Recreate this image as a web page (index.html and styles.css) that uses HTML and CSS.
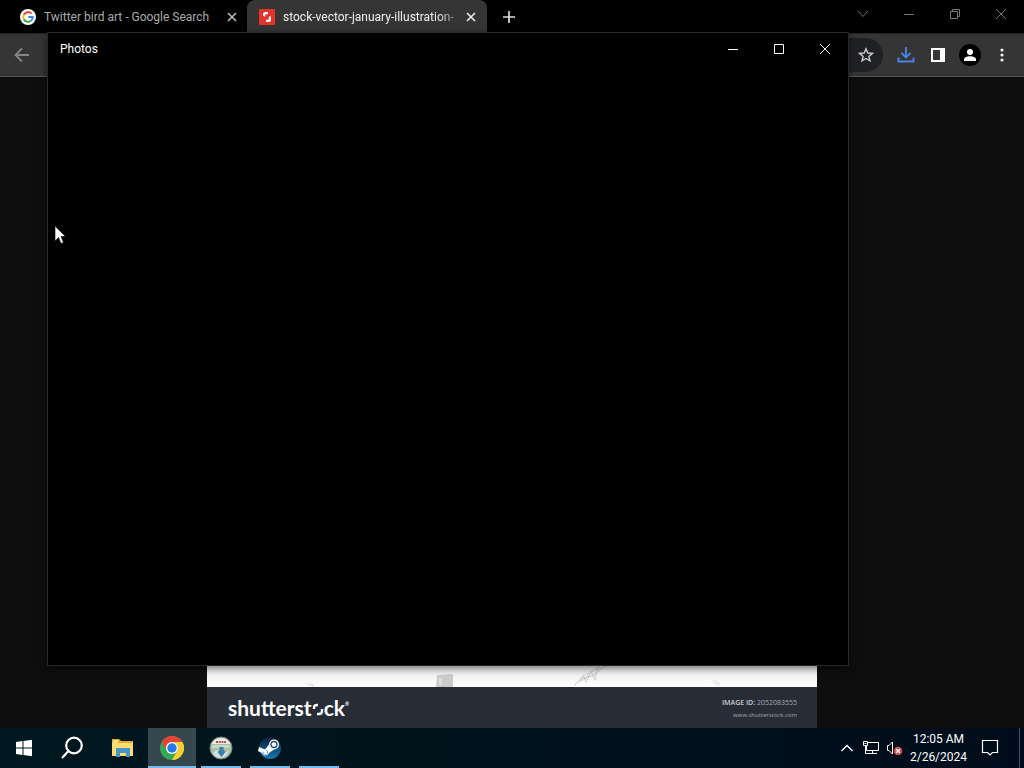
FILE: index.html
```html
<!DOCTYPE html>
<html lang="en">
<head>
<meta charset="utf-8">
<title>Desktop</title>
<link rel="stylesheet" href="styles.css">
</head>
<body>
<div class="desktop">
  <header class="tabstrip">
    <div class="tab">
      <svg class="favicon" viewBox="0 0 16 16" aria-hidden="true"><circle cx="8" cy="8" r="8" fill="#fff"/><g fill="none" stroke-width="2"><path d="M11.6 4.7A4.8 4.8 0 0 0 3.8 5.7" stroke="#ea4335"/><path d="M3.8 5.7a4.8 4.8 0 0 0 0 4.6" stroke="#fbbc05"/><path d="M3.8 10.3a4.8 4.8 0 0 0 7.2 1.4" stroke="#34a853"/><path d="M11 11.7A4.8 4.8 0 0 0 12.8 8H8.2" stroke="#4285f4"/></g></svg>
      <span class="tab-title">Twitter bird art - Google Search</span>
      <button class="tab-close" aria-label="Close tab"><svg width="10" height="10" viewBox="0 0 10 10"><path d="M1 1l8 8M9 1L1 9" stroke="#bbb" stroke-width="1.6"/></svg></button>
    </div>
    <div class="tab tab-active">
      <svg class="favicon" viewBox="0 0 16 16" aria-hidden="true"><rect width="16" height="16" rx="1" fill="#e5322b"/><path d="M6.500 3H9v2.200H7.500Q6.200 5.200 6.200 6.500V8L4 6.500V5.500Q4 3 6.500 3zM12 7.500V10.500Q12 13 9.500 13H7v-2.200h1.500Q9.800 10.800 9.800 9.500V7.500z" fill="#fff"/></svg>
      <span class="tab-title">stock-vector-january-illustration-</span>
      <button class="tab-close" aria-label="Close tab"><svg width="10" height="10" viewBox="0 0 10 10"><path d="M1 1l8 8M9 1L1 9" stroke="#eee" stroke-width="1.600"/></svg></button>
    </div>
    <button class="new-tab" aria-label="New tab"><svg width="12" height="12" viewBox="0 0 12 12"><path d="M6 0v12M0 6h12" stroke="#ddd" stroke-width="1.700"/></svg></button>
    <div class="caption caption-dim">
      <button aria-label="Search tabs"><svg width="12" height="12" viewBox="0 0 12 12"><path d="M1 3l5 5.500L11 3"/></svg></button>
      <button aria-label="Minimize"><svg width="12" height="12" viewBox="0 0 12 12"><path d="M1 6.500h10"/></svg></button>
      <button aria-label="Restore"><svg width="12" height="12" viewBox="0 0 12 12"><path d="M1.500 3.500h7v7h-7zM3.500 3.500v-2h7v7h-2"/></svg></button>
      <button aria-label="Close"><svg width="12" height="12" viewBox="0 0 12 12"><path d="M1 1l10 10M11 1L1 11"/></svg></button>
    </div>
  </header>

  <nav class="toolbar" aria-label="Browser toolbar">
    <button class="back" aria-label="Back"><svg width="16" height="16" viewBox="0 0 16 16"><path d="M15 8H2M8 1.500L1.500 8L8 14.500" fill="none" stroke="#858585" stroke-width="1.800"/></svg></button>
    <div class="address">
      <button aria-label="Bookmark this tab"><svg width="16" height="16" viewBox="0 0 16 16"><path d="M8 1.800l1.800 4.200 4.600.4-3.500 3 1.100 4.500L8 11.500l-4 2.400 1.100-4.500-3.500-3 4.600-.4z" fill="none" stroke="#ccc" stroke-width="1.400"/></svg></button>
    </div>
    <button class="tool" aria-label="Downloads"><svg width="18" height="18" viewBox="0 0 18 18"><path d="M9 1v10M4.500 7L9 11.500 13.500 7M1.500 11.500v4h15v-4" fill="none" stroke="#4b80e6" stroke-width="1.900"/></svg></button>
    <button class="tool" aria-label="Side panel"><svg width="14" height="14" viewBox="0 0 14 14"><path d="M0 0h14v14H0zM2 2v10h7V2z" fill="#fff" fill-rule="evenodd"/></svg></button>
    <button class="tool" aria-label="Profile"><svg width="22" height="22" viewBox="0 0 22 22"><circle cx="11" cy="11" r="11" fill="#000"/><circle cx="11" cy="8" r="3" fill="#fff"/><path d="M5 17v-1.500C5 13.300 8 12.200 11 12.200s6 1.100 6 3.300V17z" fill="#fff"/></svg></button>
    <button class="tool" aria-label="Menu"><svg width="4" height="14" viewBox="0 0 4 14" fill="#eee"><circle cx="2" cy="2" r="1.600"/><circle cx="2" cy="7" r="1.600"/><circle cx="2" cy="12" r="1.600"/></svg></button>
  </nav>

  <main class="page">
    <figure class="stock">
      <div class="artwork">
        <svg width="610" height="22" viewBox="0 0 610 22" aria-hidden="true"><path d="M230 10l16-1v13h-17z" fill="#ccc"/><path d="M232 13h3v7h-3z" fill="#dedede"/><path d="M97 18l9 1 1 3-5-2z" fill="#e4e4e4"/><g stroke="#c4c4c4" stroke-width="1.500" stroke-dasharray="1 1" fill="none"><path d="M368 20l8-9 8-4 9-6M371 17l7-3 8-8 16-6M376 10l3 7 5-10 4 7 3-12M373 14l12-3 10-8"/></g><path d="M504 17l5-3 5 5-3 2z" fill="#eee"/></svg>
      </div>
      <figcaption class="credit">
        <span class="brand">shutterst<svg width="12" height="13" viewBox="0 0 12 13" aria-hidden="true"><path d="M2 6V5Q2 2 5 2h1M10 6v2q0 3-3 3H5" fill="none" stroke="#fff" stroke-width="2.400"/></svg>ck<small>®</small></span>
        <span class="image-id"><b>IMAGE ID:</b> 2052083555<br><a href="#">www.shutterstock.com</a></span>
      </figcaption>
    </figure>
  </main>

  <footer class="taskbar">
    <button class="task" aria-label="Start"><svg width="18" height="18" viewBox="0 0 18 18" fill="#fff"><path d="M1 3l6.500-1v6.500H1zM8.500 1.900L17 .7v7.800H8.500zM1 9.500h6.500V16L1 15zM8.500 9.500H17v7.800l-8.500-1.200z"/></svg></button>
    <button class="task" aria-label="Search"><svg width="24" height="24" viewBox="0 0 24 24" fill="none" stroke="#fff" stroke-width="2.200"><circle cx="14" cy="9.500" r="7.800"/><path d="M8.500 15L2 22"/></svg></button>
    <button class="task" aria-label="File Explorer"><svg width="24" height="24" viewBox="0 0 24 24"><path d="M2 3h7l2 2h12v15H2z" fill="#e8ad35"/><path d="M3 4h5v3H3z" fill="#f8e38b"/><path d="M2 7h21v13H2z" fill="#ffdc70"/><path d="M6 12h14v9h-4v-4h-6v4H6z" fill="#4596c7"/></svg></button>
    <button class="task task-current" aria-label="Google Chrome"><svg width="24" height="24" viewBox="0 0 24 24"><circle cx="12" cy="12" r="12" fill="#34a853"/><path d="M12 6h10.400A12 12 0 0 0 1.600 6L6.800 15A6 6 0 0 1 12 6z" fill="#ea4335"/><path d="M22.400 6A12 12 0 0 1 12 24l5.200-9A6 6 0 0 0 12 6z" fill="#fbcf2d"/><circle cx="12" cy="12" r="6" fill="#fff"/><circle cx="12" cy="12" r="4.700" fill="#2878e8"/></svg></button>
    <button class="task task-open" aria-label="Installer"><svg width="24" height="24" viewBox="0 0 24 24"><circle cx="12" cy="12" r="11" fill="#a9bfa8" stroke="#76877f"/><path d="M2.500 8a10.500 10.500 0 0 1 19 0z" fill="#eee9e7"/><path d="M7 6h10" stroke="#b05357" stroke-width="2" stroke-dasharray="2 .7"/><path d="M3 9h18v3H3z" fill="#c6d8bf"/><path d="M4 17q4-5 8-2t8-1q-2 8-8 8t-8-5z" fill="#d3e0e3"/><path d="M10.500 11h4v3l2 2-4 5-4-5 2-2z" fill="#3e7fa9"/></svg></button>
    <button class="task task-open" aria-label="Steam"><svg width="24" height="24" viewBox="0 0 24 24"><defs><linearGradient id="steam" x2="0" y2="1"><stop offset="0" stop-color="#0b1c35"/><stop offset="1" stop-color="#1979b5"/></linearGradient></defs><circle cx="12" cy="12" r="11" fill="url(#steam)"/><path d="M1 11l6 2.500 4-5a5 5 0 1 1 5 5l-5 3.500a3.700 3.700 0 0 1-7 0L0 15z" fill="#fff"/><circle cx="16" cy="8.500" r="3" fill="#fff" stroke="#234b70" stroke-width="1.300"/><path d="M5 15.500a2.500 2.500 0 1 0 3-1.500" fill="none" stroke="#7b9eb9"/></svg></button>
    <button class="task task-open" aria-label="Photos"></button>
    <div class="tray">
      <button aria-label="Show hidden icons"><svg width="14" height="10" viewBox="0 0 14 10"><path d="M1.500 8L7 2.500 12.500 8" fill="none" stroke="#fff" stroke-width="1.400"/></svg></button>
      <button aria-label="Network"><svg width="18" height="16" viewBox="0 0 18 16" fill="none" stroke="#fff"><path d="M5.500 2.500h11v8h-12V6M10.500 10.500v3M6 13.500h9M1.500 1.500h4v4h-4zM3.500 5.500v8h3M2.500 3.500h2"/></svg></button>
      <button aria-label="Volume muted"><svg width="18" height="16" viewBox="0 0 18 16"><path d="M1.500 5.500H3l3.500-3.500v12L3 10.500H1.500z" fill="none" stroke="#fff"/><circle cx="12" cy="11" r="4.300" fill="#d64a50"/><path d="M10 9l4 4M14 9l-4 4" stroke="#fff" stroke-width="1.200"/></svg></button>
      <time class="clock" datetime="2024-02-26T00:05"><span>12:05 AM</span><span>2/26/2024</span></time>
      <button class="notifications" aria-label="Notifications"><svg width="18" height="18" viewBox="0 0 18 18"><path d="M1.500 1.500h15v12h-5L9 16l-2.500-2.500h-5z" fill="none" stroke="#fff" stroke-width="1.200"/></svg></button>
    </div>
  </footer>

  <section class="photos" aria-label="Photos window">
    <div class="photos-bar">
      <span class="photos-title">Photos</span>
      <div class="caption">
        <button aria-label="Minimize"><svg width="12" height="12" viewBox="0 0 12 12"><path d="M1 6.500h10"/></svg></button>
        <button aria-label="Maximize"><svg width="12" height="12" viewBox="0 0 12 12"><path d="M1.500 1.500h9v9h-9z"/></svg></button>
        <button aria-label="Close"><svg width="12" height="12" viewBox="0 0 12 12"><path d="M1 1l10 10M11 1L1 11"/></svg></button>
      </div>
    </div>
  </section>
  <svg class="pointer" width="12" height="20" viewBox="0 0 12 20" aria-hidden="true"><path d="M1 1v15l3.500-3.500L7 18.500l2.500-1-2.500-6h4.500z" fill="#fff" stroke="#000" stroke-width=".6"/></svg>
</div>
</body>
</html>
```

FILE: styles.css
```css
* { box-sizing: border-box; }
body { margin: 0; background: #0e0e0e; color: #fff; font: 12px/16px Roboto, "Open Sans", sans-serif; }
button { display: flex; align-items: center; justify-content: center; padding: 0; border: 0; background: none; color: inherit; font: inherit; }
svg { display: block; flex: none; }

.desktop { position: relative; display: flex; flex-direction: column; min-height: 100vh; overflow: hidden; }

.tabstrip { display: flex; height: 34px; background: #000; border-bottom: 1px solid #222; }
.tab { display: flex; align-items: center; gap: 8px; width: 240px; padding: 0 11px 0 12px; color: #aaa; }
.tab:first-child { width: 247px; padding-left: 20px; padding-right: 10px; }
.tab-active { background: #353535; border-radius: 8px 8px 0 0; color: #eee; }
.tab-active .tab-title { mask-image: linear-gradient(to right, #000 88%, transparent 104%); }
.favicon { width: 16px; height: 16px; }
.tab-title { flex: 1; min-width: 0; white-space: nowrap; }
.tab-close { width: 10px; height: 16px; }
.new-tab { width: 44px; }

.caption { display: flex; margin-left: auto; }
.caption button { width: 46px; height: 32px; }
.caption svg { fill: none; stroke: #fff; stroke-width: 1; }
.caption-dim { height: 28px; }
.caption-dim button { height: 28px; }
.caption-dim svg { stroke: #777; }

.toolbar { display: flex; align-items: center; height: 43px; padding-right: 6px; background: #353535; border-bottom: 1px solid #555; }
.back { width: 44px; height: 34px; }
.address { display: flex; justify-content: flex-end; align-items: center; flex: 1; height: 34px; margin: 0 7px 0 48px; padding-right: 9px; border-radius: 17px; background: #202124; }
.tool { width: 32px; height: 32px; }

.page { display: flex; flex: 1; flex-direction: column; align-items: center; background: #0e0e0e; }
.stock { display: flex; flex: 1; flex-direction: column; width: 610px; max-width: 100%; margin: 0; }
.artwork { display: flex; flex: 1; align-items: flex-end; background: linear-gradient(to top, #fff, #f4f4f4 12px, #ddd 22px); }
.credit { display: flex; align-items: center; justify-content: space-between; height: 41px; padding: 0 20px 0 21px; background: #262d37; }
.brand { display: flex; align-items: baseline; font: 700 21px/28px Lato, sans-serif; }
.brand small { align-self: flex-start; font-size: 5px; line-height: 20px; }
.image-id { padding-top: 2px; color: #aaa; font-family: "Open Sans", sans-serif; font-size: 7px; line-height: 12px; text-align: right; }
.image-id b { color: #ccc; font-weight: 600; }
.image-id a { color: inherit; font-size: 6px; text-decoration: none; }

.taskbar { display: flex; height: 40px; background: linear-gradient(to right, #001820, #00121b 50%, #000c1b); }
.task { width: 49px; padding-top: 2px; border-bottom: 2px solid transparent; }
.task:first-child, .task:nth-child(2) { width: 48px; }
.task:nth-child(3) { width: 52px; }
.task-current { width: 48px; background: #34484e; border-color: #76b9ed; }
.task-open { width: 40px; margin-left: 5px; margin-right: 4px; border-color: #76b9ed; }
.tray { display: flex; align-items: center; margin-left: auto; padding-right: 4px; }
.tray button { width: 24px; height: 40px; }
.clock { display: flex; flex-direction: column; align-items: center; width: 63px; line-height: 18px; }
.tray .notifications { width: 50px; padding-right: 9px; border-right: 1px solid #45505c; }

.photos { position: absolute; top: 32px; right: 175px; bottom: 102px; left: 47px; background: #000; border: 1px solid #282828; box-shadow: 0 2px 8px rgba(0, 0, 0, .5); }
.photos-bar { display: flex; align-items: center; padding-left: 12px; }
.pointer { position: absolute; top: 225px; left: 54px; }
```
